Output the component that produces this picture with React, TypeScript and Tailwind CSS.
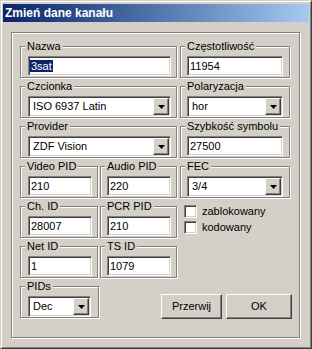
import React from "react";

const etched = "border border-[#808080] shadow-[inset_1px_1px_0_#fff,1px_1px_0_#fff]";
const sunken =
  "border border-t-[#808080] border-l-[#808080] border-r-white border-b-white shadow-[inset_1px_1px_0_#404040,inset_-1px_-1px_0_#d4d0c8]";
const raised =
  "border border-t-white border-l-white border-r-[#404040] border-b-[#404040] shadow-[inset_-1px_-1px_0_#808080]";

function Group({ label, className, children }: { label: string; className: string; children?: React.ReactNode }) {
  return (
    <div className={`relative h-[32px] pt-[9px] ${etched} ${className}`}>
      <span className="absolute left-[4px] top-[-7px] bg-[#d4d0c8] px-[2px] leading-[13px]">{label}</span>
      {children}
    </div>
  );
}

function Edit({ value, className, selected }: { value: string; className: string; selected?: boolean }) {
  return (
    <div className={`h-[20px] bg-white pl-[1px] leading-[18px] ${sunken} ${className}`}>
      {selected ? <span className="bg-[#0a246a] px-[1px] text-white">{value}</span> : <span className="pl-[1px]">{value}</span>}
    </div>
  );
}

function Combo({ value, className }: { value: string; className: string }) {
  return (
    <div className={`flex h-[21px] items-stretch bg-white p-[1px] ${sunken} ${className}`}>
      <span className="flex-1 pl-[3px] leading-[17px]">{value}</span>
      <div className={`flex w-[16px] items-center justify-center bg-[#d4d0c8] ${raised}`}>
        <svg width="7" height="4" viewBox="0 0 7 4">
          <path d="M0 0h7L3.5 4z" fill="#000" />
        </svg>
      </div>
    </div>
  );
}

function Check({ label }: { label: string }) {
  return (
    <div className="flex items-center gap-[5px] leading-[13px]">
      <div className={`h-[13px] w-[13px] bg-white ${sunken}`} />
      <span>{label}</span>
    </div>
  );
}

function Button({ label, className }: { label: string; className: string }) {
  return (
    <div className={`flex h-[25px] items-center justify-center bg-[#d4d0c8] ${raised} ${className}`}>{label}</div>
  );
}

export default function App() {
  return (
    <div className="h-[349px] w-[312px] bg-[#d4d0c8] font-['Liberation_Sans',Arial,sans-serif] text-[11px] text-black">
      <div className="flex h-full flex-col border border-t-[#d4d0c8] border-l-[#d4d0c8] border-r-[#404040] border-b-[#404040] p-[2px] shadow-[inset_1px_1px_0_#fff,inset_-1px_-1px_0_#808080]">
        {/* pasek tytułu */}
        <div className="mt-[1px] flex h-[18px] items-center bg-linear-to-r from-[#0a246a] to-[#a6caf0] pl-[2px] text-[12px] font-bold text-white">
          Zmień dane kanału
        </div>

        <div className={`ml-[8px] mt-[10px] flex h-[306px] w-[289px] flex-col gap-[8px] pl-[8px] pt-[13px] ${etched}`}>
          <div className="flex gap-[3px]">
            <Group label="Nazwa" className="w-[157px] pl-[7px]">
              <Edit value="3sat" className="w-[143px]" selected />
            </Group>
            <Group label="Częstotliwość" className="w-[110px] pl-[6px]">
              <Edit value="11954" className="w-[96px]" />
            </Group>
          </div>

          <div className="flex gap-[3px]">
            <Group label="Czcionka" className="w-[157px] pl-[7px]">
              <Combo value="ISO 6937 Latin" className="w-[143px]" />
            </Group>
            <Group label="Polaryzacja" className="w-[110px] pl-[6px]">
              <Combo value="hor" className="w-[96px]" />
            </Group>
          </div>

          <div className="flex gap-[3px]">
            <Group label="Provider" className="w-[157px] pl-[7px]">
              <Combo value="ZDF Vision" className="w-[143px]" />
            </Group>
            <Group label="Szybkość symbolu" className="w-[110px] pl-[6px]">
              <Edit value="27500" className="w-[96px]" />
            </Group>
          </div>

          <div className="flex">
            <Group label="Video PID" className="w-[78px] pl-[7px]">
              <Edit value="210" className="w-[64px]" />
            </Group>
            <Group label="Audio PID" className="ml-[2px] w-[77px] pl-[6px]">
              <Edit value="220" className="w-[64px]" />
            </Group>
            <Group label="FEC" className="ml-[3px] w-[110px] pl-[6px]">
              <Combo value="3/4" className="w-[96px]" />
            </Group>
          </div>

          <div className="flex">
            <Group label="Ch. ID" className="w-[78px] pl-[7px]">
              <Edit value="28007" className="w-[64px]" />
            </Group>
            <Group label="PCR PID" className="ml-[2px] w-[77px] pl-[6px]">
              <Edit value="210" className="w-[64px]" />
            </Group>
            <div className="ml-[7px] mt-[-1px] flex flex-col gap-[3px]">
              <Check label="zablokowany" />
              <Check label="kodowany" />
            </div>
          </div>

          <div className="flex">
            <Group label="Net ID" className="w-[78px] pl-[7px]">
              <Edit value="1" className="w-[64px]" />
            </Group>
            <Group label="TS ID" className="ml-[2px] w-[77px] pl-[6px]">
              <Edit value="1079" className="w-[64px]" />
            </Group>
          </div>

          <div className="flex items-start">
            <Group label="PIDs" className="w-[79px] pl-[7px]">
              <Combo value="Dec" className="w-[63px]" />
            </Group>
            <div className="ml-[62px] mt-[8px] flex gap-[4px]">
              <Button label="Przerwij" className="w-[61px]" />
              <Button label="OK" className="w-[66px]" />
            </div>
          </div>
        </div>
      </div>
    </div>
  );
}
